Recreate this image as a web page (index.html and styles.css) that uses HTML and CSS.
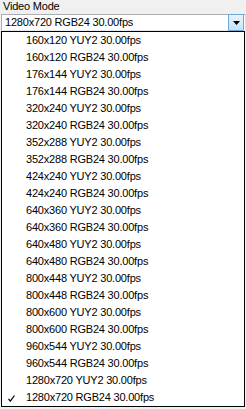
FILE: index.html
```html
<!DOCTYPE html>
<html lang="en">
<head>
    <meta charset="UTF-8">
    <meta name="viewport" content="width=device-width, initial-scale=1.0">
    <title>Video Mode</title>
    <link rel="stylesheet" href="styles.css">
</head>
<body>
    <div class="panel">
        <div class="field-label">Video Mode</div>
        <div class="combo">
            <span class="combo-value">1280x720 RGB24 30.00fps</span>
            <span class="combo-button">
                <svg width="7" height="4" viewBox="0 0 7 4"><path d="M0 0H7L3.5 4Z" fill="#000"/></svg>
            </span>
        </div>

        <ul class="dropdown">
            <li>160x120 YUY2 30.00fps</li>
            <li>160x120 RGB24 30.00fps</li>
            <li>176x144 YUY2 30.00fps</li>
            <li>176x144 RGB24 30.00fps</li>
            <li>320x240 YUY2 30.00fps</li>
            <li>320x240 RGB24 30.00fps</li>
            <li>352x288 YUY2 30.00fps</li>
            <li>352x288 RGB24 30.00fps</li>
            <li>424x240 YUY2 30.00fps</li>
            <li>424x240 RGB24 30.00fps</li>
            <li>640x360 YUY2 30.00fps</li>
            <li>640x360 RGB24 30.00fps</li>
            <li>640x480 YUY2 30.00fps</li>
            <li>640x480 RGB24 30.00fps</li>
            <li>800x448 YUY2 30.00fps</li>
            <li>800x448 RGB24 30.00fps</li>
            <li>800x600 YUY2 30.00fps</li>
            <li>800x600 RGB24 30.00fps</li>
            <li>960x544 YUY2 30.00fps</li>
            <li>960x544 RGB24 30.00fps</li>
            <li>1280x720 YUY2 30.00fps</li>
            <li class="checked">
                <svg class="check" width="7" height="7" viewBox="0 0 7 7"><path d="M0.5 3.8L2.3 6.2L6.5 0.5" fill="none" stroke="#000" stroke-width="1.2"/></svg>
                1280x720 RGB24 30.00fps
            </li>
        </ul>
    </div>
</body>
</html>
```

FILE: styles.css
```css
* {
    margin: 0;
    padding: 0;
    box-sizing: border-box;
}

body {
    font-family: 'Liberation Sans', Arial, sans-serif;
    font-size: 11px;
    letter-spacing: -0.2px;
    color: #000;
    background: #f0f0f0;
    width: 246px;
    height: 409px;
    overflow: hidden;
}

.panel {
    position: relative;
    height: 409px;
}

.field-label {
    height: 14px;
    line-height: 12px;
    padding-left: 3px;
}

.combo {
    display: flex;
    align-items: center;
    justify-content: space-between;
    margin-left: 1px;
    width: 245px;
    height: 17px;
    background: white;
    border: 1px solid #abadb3;
    border-right-color: #dbdfe6;
    border-bottom-color: #e3e9ef;
}

.combo-value {
    padding-left: 3px;
    line-height: 15px;
}

.combo-button {
    display: flex;
    align-items: center;
    justify-content: center;
    width: 16px;
    height: 17px;
    margin: -1px 1px 0 0;
    align-self: flex-start;
    border: 1px solid #6ea6d8;
    border-radius: 1px;
    background: linear-gradient(#e8f4fc, #c6e3f7);
}

.dropdown {
    position: absolute;
    top: 31px;
    left: 1px;
    width: 244px;
    list-style: none;
    background: white;
    border: 1px solid #000;
}

.dropdown li {
    position: relative;
    height: 17px;
    line-height: 17px;
    padding-left: 24px;
    white-space: nowrap;
}

.check {
    position: absolute;
    left: 6px;
    top: 6px;
}
```
